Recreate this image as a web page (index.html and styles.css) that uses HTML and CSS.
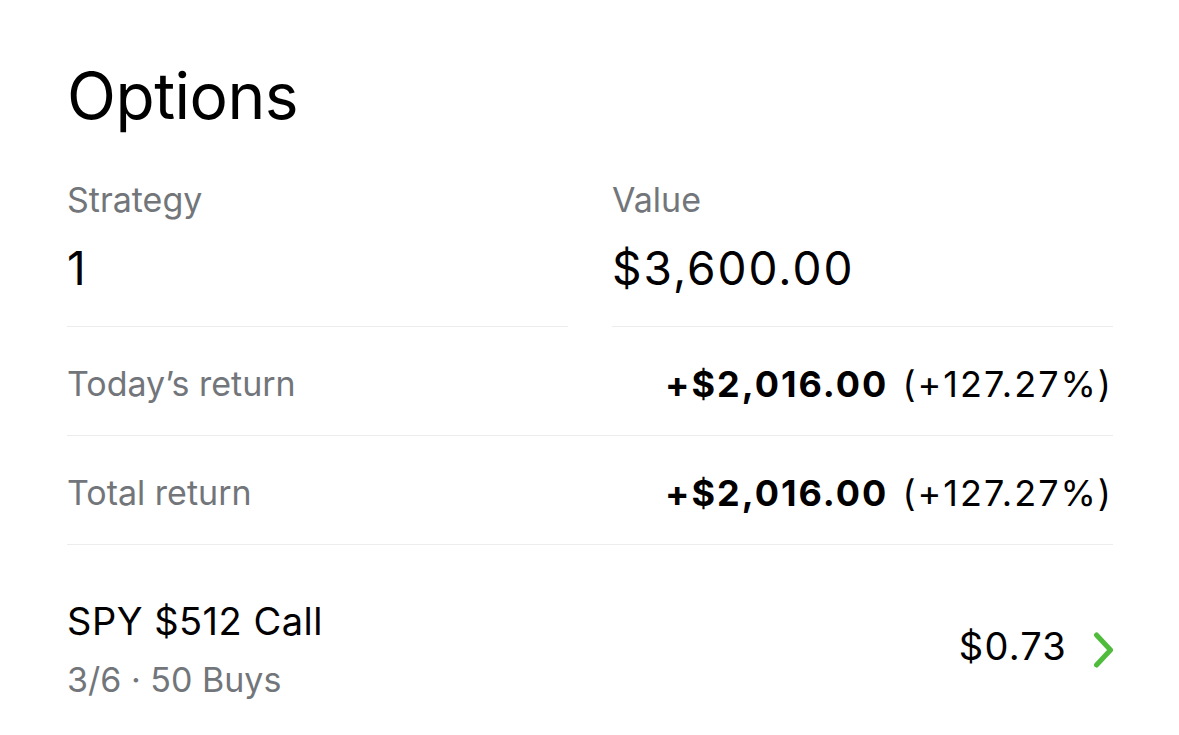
FILE: index.html
```html
<!DOCTYPE html>
<html lang="en">
<head>
  <meta charset="UTF-8">
  <meta name="viewport" content="width=device-width, initial-scale=1.0">
  <title>Options</title>
  <link rel="stylesheet" href="styles.css">
</head>
<body>
  <main class="options">
    <h1 class="title">Options</h1>

    <!-- Summary columns -->
    <section class="summary">
      <div class="stat">
        <div class="label">Strategy</div>
        <div class="big">1</div>
      </div>
      <div class="stat">
        <div class="label">Value</div>
        <div class="big">$3,600.00</div>
      </div>
    </section>

    <!-- Returns -->
    <div class="row">
      <span class="label">Today’s return</span>
      <span class="amount"><b>+$2,016.00</b> (+127.27%)</span>
    </div>
    <div class="row">
      <span class="label">Total return</span>
      <span class="amount"><b>+$2,016.00</b> (+127.27%)</span>
    </div>

    <!-- Position -->
    <a class="position" href="#">
      <div class="pos-info">
        <div class="pos-name">SPY $512 Call</div>
        <div class="pos-meta">3/6 · 50 Buys</div>
      </div>
      <div class="pos-price">
        <span class="price">$0.73</span>
        <svg class="chevron" width="22" height="36" viewBox="0 0 22 36">
          <path d="M5.5 3 L19.5 18 L5.5 33" fill="none" stroke="#4fbc3c" stroke-width="5" stroke-linecap="round" stroke-linejoin="round"/>
        </svg>
      </div>
    </a>
  </main>
</body>
</html>
```

FILE: styles.css
```css
* {
  margin: 0;
  padding: 0;
  box-sizing: border-box;
}

body {
  font-family: Inter, 'Noto Sans', sans-serif;
  background-color: #ffffff;
  color: #000000;
}

.options {
  width: 1046px;
  margin-left: 67px;
  padding-top: 58px;
}

.title {
  font-size: 64px;
  font-weight: 400;
  line-height: 76px;
  letter-spacing: -0.5px;
}

/* Summary columns */
.summary {
  display: grid;
  grid-template-columns: 1fr 1fr;
  gap: 44px;
  margin-top: 44px;
}

.stat {
  border-bottom: 1px solid #ececec;
  padding-bottom: 30px;
}

.label {
  font-size: 34px;
  color: #72767a;
  line-height: 44px;
}

.big {
  font-size: 46px;
  line-height: 56px;
  letter-spacing: 2px;
  margin-top: 18px;
}

/* Return rows */
.row {
  display: flex;
  justify-content: space-between;
  align-items: center;
  height: 109px;
  padding-top: 5px;
  border-bottom: 1px solid #ececec;
}

.amount {
  font-size: 36px;
  line-height: 44px;
  letter-spacing: 2px;
}

.amount b {
  font-weight: 700;
  margin-right: 2px;
}

/* Position row */
.position {
  display: flex;
  justify-content: space-between;
  align-items: center;
  padding-top: 52px;
  text-decoration: none;
  color: #000000;
}

.pos-name {
  font-size: 38px;
  line-height: 48px;
  letter-spacing: 0.5px;
}

.pos-meta {
  font-size: 34px;
  line-height: 44px;
  color: #72767a;
  margin-top: 13px;
}

.pos-price {
  display: flex;
  align-items: center;
  gap: 24px;
}

.price {
  font-size: 38px;
  letter-spacing: 1.2px;
  padding-bottom: 7px;
}

.chevron {
  display: block;
}
```
